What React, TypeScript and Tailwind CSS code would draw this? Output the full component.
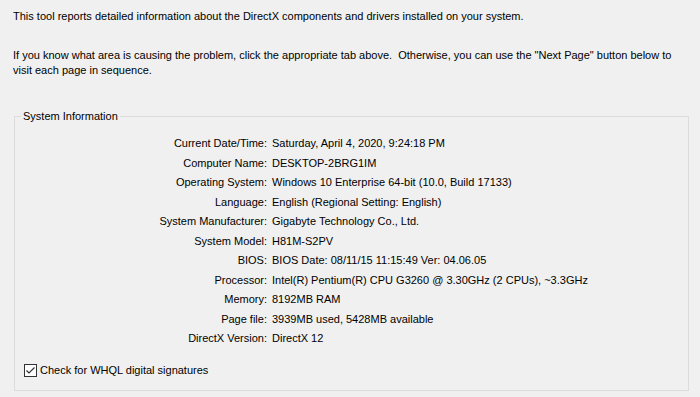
import React from "react";

const rows: [string, string][] = [
  ["Current Date/Time:", "Saturday, April 4, 2020, 9:24:18 PM"],
  ["Computer Name:", "DESKTOP-2BRG1IM"],
  ["Operating System:", "Windows 10 Enterprise 64-bit (10.0, Build 17133)"],
  ["Language:", "English (Regional Setting: English)"],
  ["System Manufacturer:", "Gigabyte Technology Co., Ltd."],
  ["System Model:", "H81M-S2PV"],
  ["BIOS:", "BIOS Date: 08/11/15 11:15:49 Ver: 04.06.05"],
  ["Processor:", "Intel(R) Pentium(R) CPU G3260 @ 3.30GHz (2 CPUs), ~3.3GHz"],
  ["Memory:", "8192MB RAM"],
  ["Page file:", "3939MB used, 5428MB available"],
  ["DirectX Version:", "DirectX 12"],
];

export default function App() {
  return (
    <div className="w-[700px] h-[397px] bg-[#f0f0f0] text-black text-[11px] leading-[15px] font-['Liberation_Sans',Arial,sans-serif] overflow-hidden">
      <p className="pl-[13px] pt-[9px] whitespace-nowrap">
        This tool reports detailed information about the DirectX components and drivers installed on your system.
      </p>
      <p className="pl-[13px] pt-[24px] whitespace-nowrap">
        If you know what area is causing the problem, click the appropriate tab above.&nbsp; Otherwise, you can use the "Next Page" button below to
        <br />
        visit each page in sequence.
      </p>

      <fieldset className="ml-[14px] mt-[31px] w-[675px] h-[282px] border border-[#dcdcdc]">
        <legend className="ml-[6px] px-[2px]">System Information</legend>
        <div className="grid grid-cols-[252px_1fr] gap-x-[5px] pt-[10px]">
          {rows.map(([label, value]) => (
            <React.Fragment key={label}>
              <div className="text-right leading-[19.5px]">{label}</div>
              <div className="leading-[19.5px] whitespace-nowrap">{value}</div>
            </React.Fragment>
          ))}
        </div>
        <label className="flex items-center gap-[3px] ml-[9px] mt-[14px]">
          <span className="w-[13px] h-[13px] border border-[#333] bg-white flex items-center justify-center">
            <svg width="11" height="11" viewBox="0 0 11 11">
              <path d="M1.5 5.5 L4 8 L9.5 2.5" fill="none" stroke="#333" strokeWidth="1.2" />
            </svg>
          </span>
          <span>Check for WHQL digital signatures</span>
        </label>
      </fieldset>
    </div>
  );
}
